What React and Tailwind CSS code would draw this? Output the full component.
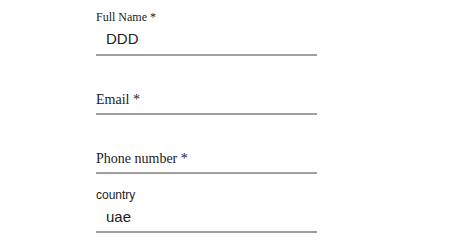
import React from 'react';

function Field({ label, value, labelClass, wrapClass }) {
  return (
    <div className={`w-[221px] border-b-2 border-[#a0a0a0] ${wrapClass}`}>
      <div className={labelClass}>{label}</div>
      {value ? (
        <div className="pl-[10px] text-[15px] leading-[18px] text-[#222] font-['Liberation_Sans',Arial,sans-serif]">{value}</div>
      ) : null}
    </div>
  );
}

export default function App() {
  return (
    <div className="bg-white min-h-screen w-[474px] h-[248px] pl-[96px] pt-[10px] text-[#222]">
      <Field
        label="Full Name *"
        value="DDD"
        wrapClass="pb-[6px]"
        labelClass="text-[12px] leading-[14px] mb-[6px] font-['Liberation_Serif','Times_New_Roman',serif]"
      />
      <Field
        label="Email *"
        wrapClass="mt-[35px] pb-[5px]"
        labelClass="text-[14px] leading-[17px] font-['Liberation_Serif','Times_New_Roman',serif]"
      />
      <Field
        label="Phone number *"
        wrapClass="mt-[35px] pb-[5px]"
        labelClass="text-[14px] leading-[17px] font-['Liberation_Serif','Times_New_Roman',serif]"
      />
      <div className="w-[221px] border-b-2 border-[#a0a0a0] mt-[14px] pb-[5px]">
        <div className="text-[12px] leading-[14px] mb-[6px] font-['Liberation_Sans',Arial,sans-serif]">country</div>
        <div className="pl-[10px] text-[15px] leading-[18px] font-['Liberation_Sans',Arial,sans-serif]">uae</div>
      </div>
    </div>
  );
}
